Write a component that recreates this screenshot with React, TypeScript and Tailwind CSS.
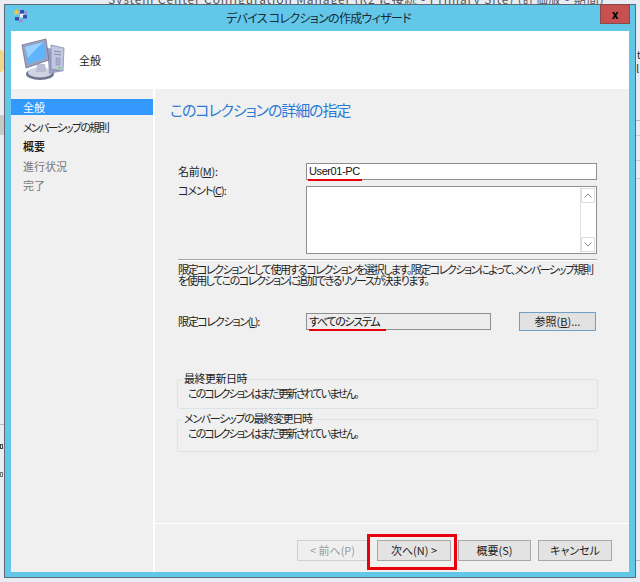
import React from 'react';

const FONT = "[font-family:'Noto_Sans_CJK_JP','Liberation_Sans',sans-serif] [font-feature-settings:'palt']";

const PcIcon = () => (
  <svg width="46" height="44" viewBox="0 0 46 44" className="shrink-0">
    <ellipse cx="21" cy="36" rx="14" ry="6" fill="#6f7590" />
    <ellipse cx="21" cy="34.5" rx="12" ry="5" fill="#cfd3e2" />
    <path d="M18 26 L26 26 L27 34 L17 34 Z" fill="#b7bdd2" />
    <path d="M28 10 L44 12 L44 33 L30 36 Z" fill="#9a9fc4" />
    <path d="M32 7 L45 10 L44 33 L32 31 Z" fill="#c3c7e0" stroke="#7d82a8" strokeWidth="0.7" />
    <path d="M35 13 L42 14 M35 16 L42 17" stroke="#8388ae" strokeWidth="1" />
    <rect x="37" y="20" width="4" height="7" fill="#a9aed0" stroke="#8388ae" strokeWidth="0.5" />
    <rect x="39" y="29" width="3" height="1.5" fill="#7ccb6a" />
    <path d="M3 7 L27 1 L30 22 L7 30 Z" fill="#9aa2bf" stroke="#6d7496" strokeWidth="0.8" />
    <path d="M6 9 L25 4 L27 20 L9 26 Z" fill="#5fb4fb" />
    <path d="M6 9 L25 4 L18 10 L9 20 Z" fill="#9ad2fd" />
  </svg>
);

const TitleIcon = () => (
  <svg width="15" height="15" viewBox="0 0 15 15">
    <path d="M3.5 0.5 L4.5 3 L7 3.5 L5 5 L5.5 7.5 L3.5 6 L1.5 7.5 L2 5 L0 3.5 L2.5 3 Z" fill="#f5c542" />
    <rect x="7" y="2" width="4" height="3.5" fill="#3d4aa8" />
    <rect x="11" y="3" width="3.5" height="3.5" fill="#8f97d8" />
    <rect x="7" y="6" width="4" height="3.5" fill="#e8ecfa" />
    <rect x="10" y="7" width="4" height="3.5" fill="#3d4aa8" />
    <rect x="2" y="9" width="4" height="3.5" fill="#3d4aa8" />
    <rect x="6" y="11" width="4" height="3.5" fill="#8f97d8" />
  </svg>
);

const NavItem = ({ label, tone }: { label: string; tone: string }) => (
  <div className={`flex h-[19.5px] items-center pl-3 text-[11px] ${tone}`}>{label}</div>
);

const Group = ({ title, titleClass, height }: { title: string; titleClass: string; height: string }) => (
  <div className={`relative rounded-[3px] border border-[#dce3e6] pl-[10px] pt-[6px] ${height}`}>
    <div className={`absolute -top-[9px] left-[5px] bg-[#f0f0f0] px-px text-[11px] leading-[15px] text-[#222] ${titleClass}`}>
      {title}
    </div>
    <div className="text-[11px] leading-[15px] tracking-[-1.9px] text-[#222]">このコレクションはまだ更新されていません。</div>
  </div>
);

const WizardButton = ({ label, width, disabled }: { label: string; width: string; disabled?: boolean }) => (
  <div
    className={`flex h-[21px] items-center justify-center border text-[11px] ${width} ${
      disabled ? 'border-[#d0d0d0] bg-[#efefef] text-[#9a9a9a]' : 'border-[#a8a8a8] bg-[#e3e3e3] text-[#222]'
    }`}
  >
    {label}
  </div>
);

const App: React.FC = () => {
  return (
    <div className={`relative h-[582px] w-[640px] overflow-hidden bg-[#e9edf3] ${FONT}`}>
      {/* desktop behind the dialog */}
      <div className="absolute left-0 top-[-9px] w-full whitespace-nowrap pl-[108px] text-[12px] leading-[15px] tracking-[0.9px] text-[#555]">
        System Center Configuration Manager (R2 に接続 - Primary Site) (評価版 - 期間)
      </div>
      <div className="absolute left-0 top-[50px] h-[22px] w-[4px] rounded-r-sm bg-[#f3d68a]" />
      <div className="absolute left-0 top-[115px] h-[20px] w-[4px] bg-[#c8c8c8]" />
      <div className="absolute left-0 top-[424px] h-px w-[4px] bg-[#b8bcc2]" />
      <div className="absolute left-0 top-[444px] h-[5px] w-[3px] border border-[#444]" />
      <div className="absolute left-0 top-[472px] h-[5px] w-[3px] border border-[#777]" />
      <div className="absolute right-[-1px] top-[47px] text-[11px] leading-[14px] text-[#333]">t</div>
      <div className="absolute right-[1px] top-[61px] text-[11px] leading-[14px] text-[#333]">l</div>
      <div className="absolute right-0 top-[120px] h-px w-[4px] bg-[#b8bcc2]" />
      <div className="absolute right-0 top-[135px] h-px w-[4px] bg-[#c8ccd2]" />
      <div className="absolute right-0 top-[160px] h-px w-[4px] bg-[#c8ccd2]" />
      <div className="absolute right-0 top-[178px] h-px w-[4px] bg-[#c8ccd2]" />
      <div className="absolute right-0 top-[560px] h-px w-[4px] bg-[#b8bcc2]" />

      <div className="absolute left-[4px] top-[4px] flex h-[574px] w-[632px] flex-col border border-[#5a6a72] bg-[#63c7ea] pb-[5px] pl-[6px] pr-[6px]">
        <div className="relative flex h-[26px] shrink-0 items-center justify-center text-[12px] text-[#1a2a30]">
          <div className="absolute left-[2px] top-[3px]"><TitleIcon /></div>
          <span className="pr-[3px] tracking-[-0.7px]">デバイス コレクションの作成ウィザード</span>
          <div className="absolute -right-px -top-px flex h-[20px] w-[30px] items-center justify-center border border-[#8a4a4a] bg-[#c75050] text-[12px] font-bold leading-none text-black">
            x
          </div>
        </div>

        <div className="flex min-h-0 flex-1 flex-col">
          <div className="flex h-[58px] shrink-0 items-center bg-white pl-[8px]">
            <PcIcon />
            <div className="pl-[14px] text-[11px] text-[#222]">全般</div>
          </div>

          <div className="flex min-h-0 flex-1 bg-white">
            <div className="w-[142px] shrink-0 bg-[#f0f0f0] pt-[10px]">
              <div className="flex h-[16px] items-center bg-[#3399ff] pl-3 text-[11px] text-white">全般</div>
              <div className="pt-[2px]">
                <NavItem label="メンバーシップの規則" tone="text-[#222] tracking-[-1.7px]" />
                <NavItem label="概要" tone="text-[#111] font-medium" />
                <NavItem label="進行状況" tone="text-[#777]" />
                <NavItem label="完了" tone="text-[#777]" />
              </div>
            </div>

            <div className="ml-[2px] flex min-w-0 flex-1 flex-col bg-[#f0f0f0]">
              <div className="relative min-h-0 flex-1 pl-[23px] pr-[32px] pt-[10px]">
                <div className="-ml-[8px] text-[15px] leading-[22px] tracking-[-1.1px] text-[#2b7bd6]">このコレクションの詳細の指定</div>

                <div className="relative mt-[42px] flex h-[17px] items-center">
                  <div className="w-[128px] shrink-0 text-[11px] tracking-[-0.3px] text-[#222]">名前(<span className="underline">M</span>):</div>
                  <div className="flex h-[17px] flex-1 items-center border border-[#8f8f8f] bg-white pl-[2px] text-[11px] tracking-[-0.4px] text-[#111] [font-family:'Liberation_Sans',sans-serif]">User01-PC</div>
                  <div className="absolute left-[130px] top-[16px] h-[2px] w-[54px] bg-[#e8000d]" />
                </div>

                <div className="mt-[6px] flex h-[68px] items-start">
                  <div className="-mt-[3px] w-[128px] shrink-0 text-[11px] leading-[14px] tracking-[-1px] text-[#222]">コメント(<span className="underline">C</span>):</div>
                  <div className="flex h-[68px] flex-1 justify-end border border-[#8f8f8f] bg-white p-px">
                    <div className="flex w-[15px] flex-col justify-between border-l border-[#e2e2e2] text-[#777]">
                      <div className="flex h-[15px] items-center justify-center border border-[#dcdcdc]">
                        <svg width="8" height="5" viewBox="0 0 8 5"><path d="M0.5 4.5 L4 1 L7.5 4.5" fill="none" stroke="#8a8a8a" /></svg>
                      </div>
                      <div className="flex h-[15px] items-center justify-center border border-[#dcdcdc]">
                        <svg width="8" height="5" viewBox="0 0 8 5"><path d="M0.5 0.5 L4 4 L7.5 0.5" fill="none" stroke="#8a8a8a" /></svg>
                      </div>
                    </div>
                  </div>
                </div>

                <div className="mt-[5px] h-[2px] border-t border-[#a5a5a5] bg-white" />
                <div className="mt-[3px] whitespace-nowrap text-[11px] leading-[11px] tracking-[-1.5px] text-[#222]">
                  <div>限定コレクションとして使用するコレクションを選択します。限定コレクションによって、メンバーシップ規則</div>
                  <div>を使用してこのコレクションに追加できるリソースが決まります。</div>
                </div>

                <div className="relative mt-[26px] flex h-[19px] items-center">
                  <div className="w-[128px] shrink-0 text-[11px] tracking-[-1.3px] text-[#222]">限定コレクション(<span className="underline">L</span>):</div>
                  <div className="flex h-[17px] w-[185px] items-center border border-[#8f8f8f] bg-[#ececec] pl-[2px] text-[11px] tracking-[-1.3px] text-[#111]">すべてのシステム</div>
                  <div className="ml-[28px] flex h-[19px] w-[77px] items-center justify-center border border-[#6f9fc8] bg-[#e1e1e1] text-[11px] text-[#222]">
                    参照(<span className="underline">B</span>)...
                  </div>
                  <div className="absolute left-[131px] top-[17px] h-[2px] w-[77px] bg-[#e8000d]" />
                </div>

                <div className="mt-[48px] -mx-px">
                  <Group title="最終更新日時" titleClass="tracking-[-0.5px]" height="h-[30px]" />
                </div>
                <div className="mt-[10px] -mx-px">
                  <Group title="メンバーシップの最終変更日時" titleClass="tracking-[-1.3px]" height="h-[33px]" />
                </div>
              </div>

              <div className="relative flex h-[49px] shrink-0 items-start justify-end gap-[7px] border-t border-white pr-[17px] pt-[16px]">
                <div className="mr-[2px]"><WizardButton label="< 前へ(P)" width="w-[71px]" disabled /></div>
                <WizardButton label="次へ(N) >" width="w-[74px]" />
                <WizardButton label="概要(S)" width="w-[73px]" />
                <WizardButton label="キャンセル" width="w-[74px]" />
                <div className="absolute left-[212px] top-[10px] h-[36px] w-[90px] border-[3px] border-[#e8000d]" />
              </div>
            </div>
          </div>
        </div>
      </div>
    </div>
  );
};

export default App;
